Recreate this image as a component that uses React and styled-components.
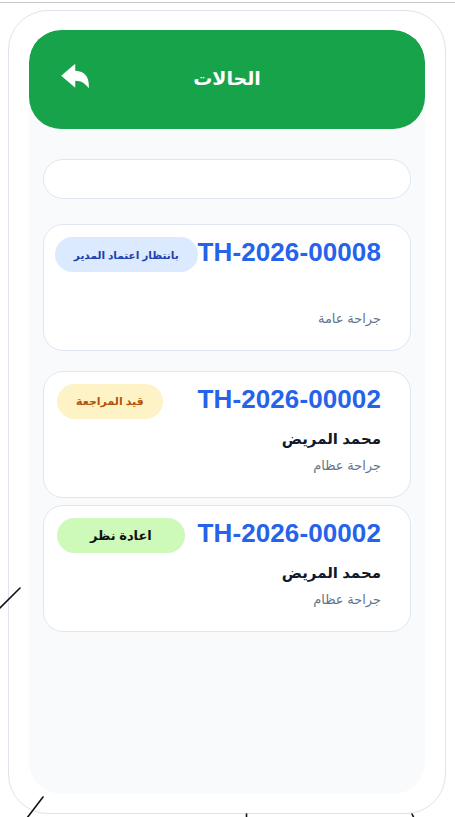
import React from "react";
import styled, { createGlobalStyle } from "styled-components";
import { IoArrowUndoSharp } from "react-icons/io5";

const Global = createGlobalStyle`
  html, body { margin: 0; padding: 0; background: #ffffff; }
  body { font-family: "Liberation Sans", "DejaVu Sans", sans-serif; }
  * { box-sizing: border-box; }
`;

const Page = styled.div`
  position: relative;
  width: 455px;
  height: 817px;
  overflow: hidden;
  background: #ffffff;
`;

const TopRule = styled.div`
  height: 1px;
  background: #c9c9c9;
  margin-top: 2px;
`;

const Frame = styled.div`
  margin: 7px 0 0 8px;
  width: 438px;
  height: 804px;
  border: 1px solid #dde4ee;
  border-radius: 40px;
  padding: 19px 20px 17px 20px;
`;

const Screen = styled.div`
  direction: rtl;
  height: 764px;
  background: #f8fafc;
  border-radius: 32px;
  overflow: hidden;
  display: flex;
  flex-direction: column;
`;

const Header = styled.header`
  height: 99px;
  flex: 0 0 auto;
  background: #17a34a;
  border-radius: 32px;
  display: grid;
  grid-template-columns: 1fr auto 1fr;
  align-items: center;
  padding: 0 29px;
`;

const Title = styled.h1`
  grid-column: 2;
  margin: 0;
  color: #ffffff;
  font-size: 19px;
  font-weight: 700;
  line-height: 1;
  padding-bottom: 2px;
`;

const BackButton = styled.button`
  grid-column: 3;
  justify-self: end;
  background: none;
  border: 0;
  padding: 0;
  margin-top: -8px;
  color: #ffffff;
  display: flex;
  align-items: center;
  cursor: pointer;
`;

const Body = styled.div`
  padding: 30px 14px 0 14px;
  display: flex;
  flex-direction: column;
`;

const Search = styled.input`
  height: 40px;
  width: 100%;
  border: 1px solid #dfe6ef;
  border-radius: 20px;
  background: #ffffff;
  outline: none;
  padding: 0 16px;
  font-family: inherit;
  font-size: 14px;
  margin-bottom: 25px;
`;

const Groups = styled.div`
  display: flex;
  flex-direction: column;
  gap: 20px;
`;

const Group = styled.div`
  display: flex;
  flex-direction: column;
  gap: 7px;
`;

const Card = styled.div`
  background: #ffffff;
  border: 1px solid #dfe6ef;
  border-radius: 20px;
  padding: 12px 29px 21px 13px;
`;

const CardTop = styled.div`
  display: flex;
  justify-content: space-between;
  align-items: center;
  height: 35px;
`;

const CaseId = styled.div`
  direction: ltr;
  color: #2563eb;
  font-size: 26px;
  font-weight: 700;
  line-height: 1;
  padding-bottom: 6px;
  letter-spacing: 0.1px;
  white-space: nowrap;
`;

const tones = {
  blue: { bg: "#dbeafe", fg: "#1e40af", size: "10.5px", pad: "19px" },
  amber: { bg: "#fef3c7", fg: "#b45309", size: "11px", pad: "19px" },
  green: { bg: "#cdf9b9", fg: "#111111", size: "13px", pad: "33px" },
};

const Badge = styled.span`
  height: 35px;
  display: inline-flex;
  align-items: center;
  justify-content: center;
  border-radius: 18px;
  padding: 0 ${(p) => tones[p.$tone].pad};
  background: ${(p) => tones[p.$tone].bg};
  color: ${(p) => tones[p.$tone].fg};
  font-size: ${(p) => tones[p.$tone].size};
  font-weight: 700;
  white-space: nowrap;
`;

const Patient = styled.div`
  margin-top: 9px;
  min-height: 22px;
  line-height: 22px;
  font-size: 15px;
  font-weight: 700;
  color: #111827;
`;

const Specialty = styled.div`
  margin-top: 6px;
  line-height: 20px;
  font-size: 13px;
  color: #64748b;
`;

const Doodles = styled.svg`
  position: absolute;
  left: 0;
  top: 0;
  pointer-events: none;
`;

function CaseCard({ id, status, tone, patient, specialty }) {
  return (
    <Card>
      <CardTop>
        <CaseId>{id}</CaseId>
        <Badge $tone={tone}>{status}</Badge>
      </CardTop>
      <Patient>{patient}</Patient>
      <Specialty>{specialty}</Specialty>
    </Card>
  );
}

export default function App() {
  return (
    <Page>
      <Global />
      <TopRule />
      <Frame>
        <Screen>
          <Header>
            <Title>الحالات</Title>
            <BackButton aria-label="رجوع">
              <IoArrowUndoSharp size={34} />
            </BackButton>
          </Header>
          <Body>
            <Search type="text" />
            <Groups>
              <Group>
                <CaseCard
                  id="TH-2026-00008"
                  status="بانتظار اعتماد المدير"
                  tone="blue"
                  patient=""
                  specialty="جراحة عامة"
                />
              </Group>
              <Group>
                <CaseCard
                  id="TH-2026-00002"
                  status="قيد المراجعة"
                  tone="amber"
                  patient="محمد المريض"
                  specialty="جراحة عظام"
                />
                <CaseCard
                  id="TH-2026-00002"
                  status="اعادة نظر"
                  tone="green"
                  patient="محمد المريض"
                  specialty="جراحة عظام"
                />
              </Group>
            </Groups>
          </Body>
        </Screen>
      </Frame>
      <Doodles width="455" height="817" viewBox="0 0 455 817">
        <g stroke="#111" strokeWidth="1.6" fill="none" strokeLinecap="round">
          <line x1="0" y1="608" x2="20" y2="588" />
          <line x1="27" y1="818" x2="43" y2="797" />
          <line x1="246.5" y1="814" x2="246.5" y2="818" />
          <line x1="412" y1="814" x2="414" y2="818" />
        </g>
      </Doodles>
    </Page>
  );
}
